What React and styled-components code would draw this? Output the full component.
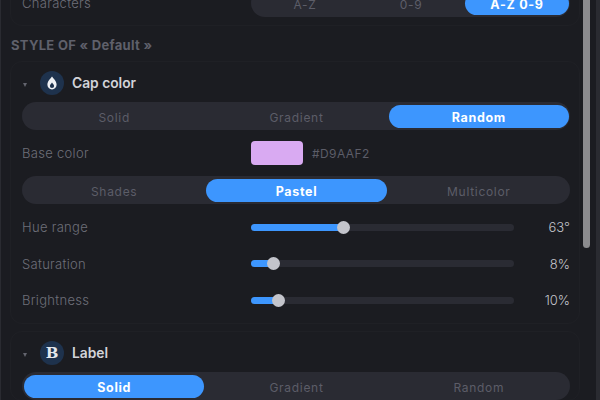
import React from 'react';
import styled, { createGlobalStyle } from 'styled-components';

const Global = createGlobalStyle`
  html, body { margin: 0; padding: 0; background: #1b1c21; }
  body { font-family: "Inter", "Open Sans", "Liberation Sans", sans-serif; }
  * { box-sizing: border-box; }
`;

const Screen = styled.div`
  position: relative;
  width: 600px;
  height: 400px;
  overflow: hidden;
  background: #1b1c21;
  border-left: 1px solid #2a2b31;
  border-right: 4px solid #2a2b31;
`;

const Scroll = styled.div`
  margin-top: -20px;
  padding: 0 16px 0 9px;
  display: flex;
  flex-direction: column;
`;

const Card = styled.section`
  border: 1px solid #1f2025;
  border-radius: 12px;
  padding: ${p => p.$top || 0}px 9px 0 11px;
  margin-bottom: ${p => p.$gap || 0}px;
`;

const SectionTitle = styled.h2`
  margin: 0;
  height: 35px;
  padding: 11px 0 0 1px;
  font-size: 13px;
  line-height: 16px;
  font-weight: 700;
  letter-spacing: 0.3px;
  color: #5f606b;
`;

const Header = styled.div`
  display: flex;
  align-items: center;
  height: 38px;
`;

const Caret = styled.span`
  width: 0;
  height: 0;
  margin: 3px 0 0 1px;
  border-left: 2.5px solid transparent;
  border-right: 2.5px solid transparent;
  border-top: 4px solid #63646e;
`;

const Badge = styled.span`
  display: flex;
  align-items: center;
  justify-content: center;
  width: 24px;
  height: 24px;
  margin-left: 13px;
  border-radius: 50%;
  background: #1e324d;
  color: #e4e7ec;
  font-family: "DejaVu Serif", "Liberation Serif", serif;
  font-weight: 700;
  font-size: 15px;
`;

const HeaderTitle = styled.span`
  margin-left: 8px;
  font-size: 13.8px;
  font-weight: 600;
  color: #d2d3d9;
`;

const Segment = styled.div`
  display: grid;
  grid-template-columns: repeat(3, 1fr);
  gap: 2px;
  height: 28px;
  padding: 3px 1px 2px 2px;
  border-radius: 14px;
  background: #2a2b33;
`;

const SegmentItem = styled.span`
  display: flex;
  align-items: center;
  justify-content: center;
  padding-top: 1px;
  border-radius: 12px;
  font-size: ${p => (p.$active ? 12.5 : 12)}px;
  letter-spacing: 0.7px;
  font-weight: ${p => (p.$active ? 700 : 400)};
  color: ${p => (p.$active ? '#ffffff' : '#5c5d68')};
  background: ${p => (p.$active ? '#3d96fe' : 'transparent')};
`;

const Row = styled.div`
  display: grid;
  grid-template-columns: 229px 1fr;
  align-items: center;
  height: ${p => p.$height}px;
`;

const Label = styled.span`
  font-size: 13px;
  font-weight: 300;
  letter-spacing: 0.3px;
  color: #6e6f79;
`;

const ColorField = styled.div`
  display: flex;
  align-items: center;
  gap: 9px;
`;

const Swatch = styled.span`
  width: 52px;
  height: 24px;
  border-radius: 4px;
  background: ${p => p.$color};
`;

const Hex = styled.span`
  font-size: 12px;
  letter-spacing: 0.4px;
  color: #5c5d68;
`;

const SliderField = styled.div`
  display: grid;
  grid-template-columns: 263px 1fr;
  align-items: center;
`;

const Track = styled.div`
  position: relative;
  height: 7px;
  border-radius: 4px;
  background: #2a2b33;
`;

const Fill = styled.div`
  height: 100%;
  border-radius: 4px;
  background: #3d96fe;
`;

const Thumb = styled.span`
  position: absolute;
  top: -3px;
  width: 13px;
  height: 13px;
  margin-left: -6.5px;
  border-radius: 50%;
  background: #c3c4cb;
`;

const Value = styled.span`
  text-align: right;
  font-size: 13px;
  font-weight: 300;
  color: #c3c4cb;
`;

const ScrollThumb = styled.div`
  position: absolute;
  top: 0;
  left: 582px;
  width: 7px;
  height: 248px;
  border-radius: 0 0 4px 4px;
  background: #8b8b8e;
`;

const Options = ({ items, active }) => (
  <Segment>
    {items.map(item => (
      <SegmentItem key={item} $active={item === active}>{item}</SegmentItem>
    ))}
  </Segment>
);

const Slider = ({ label, percent, value, height }) => (
  <Row $height={height}>
    <Label>{label}</Label>
    <SliderField>
      <Track>
        <Fill style={{ width: `${percent}%` }} />
        <Thumb style={{ left: `${percent}%` }} />
      </Track>
      <Value>{value}</Value>
    </SliderField>
  </Row>
);

const Drop = () => (
  <svg width="12" height="14" viewBox="0 0 12 14" aria-hidden="true">
    <path
      fillRule="evenodd"
      fill="#eef0f4"
      d="M6 0.6C7.4 2.8 10.6 5.2 10.6 8.8A4.6 4.6 0 0 1 1.4 8.8C1.4 5.2 4.6 2.8 6 0.6ZM6 6.4C5.1 7.7 3.9 8.6 3.9 10A2.1 2.1 0 0 0 8.1 10C8.1 8.6 6.9 7.7 6 6.4Z"
    />
  </svg>
);

export default function App() {
  return (
    <Screen>
      <Global />
      <Scroll>
        <Card>
          <Row $height={44}>
            <Label>Characters</Label>
            <Options items={['A-Z', '0-9', 'A-Z 0-9']} active="A-Z 0-9" />
          </Row>
        </Card>
        <SectionTitle>STYLE OF « Default »</SectionTitle>
        <Card $top={2} $gap={7}>
          <Header>
            <Caret />
            <Badge><Drop /></Badge>
            <HeaderTitle>Cap color</HeaderTitle>
          </Header>
          <Options items={['Solid', 'Gradient', 'Random']} active="Random" />
          <Row $height={46}>
            <Label>Base color</Label>
            <ColorField>
              <Swatch $color="#d9aaf2" />
              <Hex>#D9AAF2</Hex>
            </ColorField>
          </Row>
          <Options items={['Shades', 'Pastel', 'Multicolor']} active="Pastel" />
          <Slider label="Hue range" percent={35} value="63°" height={46} />
          <Slider label="Saturation" percent={8.4} value="8%" height={27} />
          <Slider label="Brightness" percent={10.6} value="10%" height={46} />
        </Card>
        <Card $top={2}>
          <Header>
            <Caret />
            <Badge>B</Badge>
            <HeaderTitle>Label</HeaderTitle>
          </Header>
          <Options items={['Solid', 'Gradient', 'Random']} active="Solid" />
        </Card>
      </Scroll>
      <ScrollThumb />
    </Screen>
  );
}
